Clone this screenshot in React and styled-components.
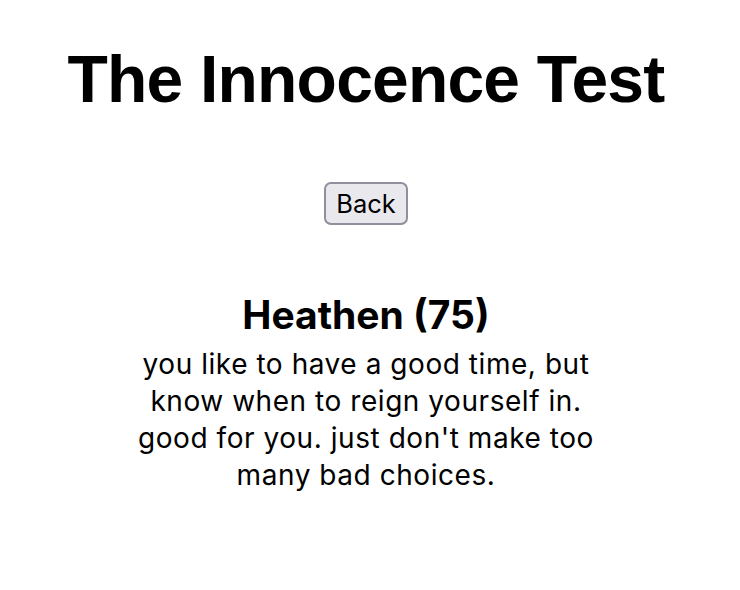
import React from 'react';
import styled, { createGlobalStyle } from 'styled-components';

const GlobalStyle = createGlobalStyle`
  body {
    margin: 0;
    background: #ffffff;
    color: #000000;
  }
`;

const Page = styled.main`
  display: flex;
  flex-direction: column;
  align-items: center;
  padding: 40px 8px 0 0;
`;

const Title = styled.h1`
  margin: 0;
  font-family: 'Liberation Sans', Arial, sans-serif;
  font-weight: 700;
  font-size: 66px;
  line-height: 78px;
  letter-spacing: -0.8px;
`;

const BackButton = styled.button`
  margin-top: 64px;
  height: 43px;
  padding: 0 10px;
  font-family: Inter, 'Noto Sans', sans-serif;
  font-size: 25.5px;
  color: #000000;
  background: #e9e9ed;
  border: 2px solid #8f8f9d;
  border-radius: 7px;
  cursor: pointer;
`;

const Result = styled.section`
  margin-top: 67px;
  width: 470px;
  display: flex;
  flex-direction: column;
  align-items: center;
  text-align: center;
  font-family: Inter, 'Noto Sans', sans-serif;
`;

const ResultName = styled.h2`
  margin: 0;
  font-size: 39px;
  font-weight: 700;
  line-height: 46px;
`;

const ResultText = styled.p`
  margin: 8px 0 0;
  font-size: 28px;
  line-height: 37px;
  letter-spacing: 0.55px;
`;

export default function App() {
  return (
    <>
      <GlobalStyle />
      <Page>
        <Title>The Innocence Test</Title>
        <BackButton>Back</BackButton>
        <Result>
          <ResultName>Heathen (75)</ResultName>
          <ResultText>
            you like to have a good time, but know when to reign yourself in.
            good for you. just don't make too many bad choices.
          </ResultText>
        </Result>
      </Page>
    </>
  );
}
